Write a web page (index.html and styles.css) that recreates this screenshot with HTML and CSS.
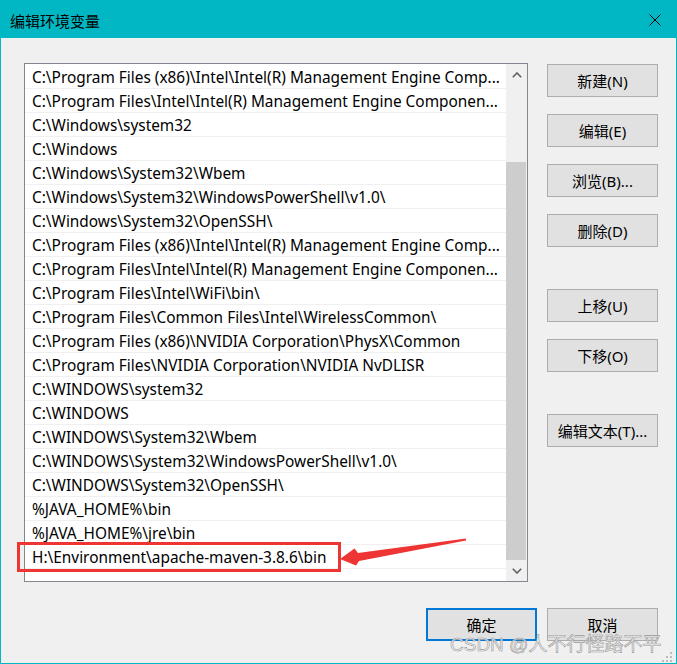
FILE: index.html
```html
<!DOCTYPE html>
<html lang="zh-CN">
<head>
  <meta charset="UTF-8" />
  <title>编辑环境变量</title>
  <link rel="stylesheet" href="styles.css">
</head>
<body>

  <div class="window">
    <div class="titlebar">
      <span class="title">编辑环境变量</span>
      <svg class="close" width="12" height="12" viewBox="0 0 12 12">
        <path d="M0.5 0.5 L11.5 11.5 M11.5 0.5 L0.5 11.5" stroke="#000" stroke-width="1" fill="none"/>
      </svg>
    </div>

    <div class="dialog">
      <div class="main">
        <!-- path list -->
        <div class="listbox">
          <div class="rows">
            <div class="row">C:\Program Files (x86)\Intel\Intel(R) Management Engine Comp...</div>
            <div class="row">C:\Program Files\Intel\Intel(R) Management Engine Componen...</div>
            <div class="row">C:\Windows\system32</div>
            <div class="row">C:\Windows</div>
            <div class="row">C:\Windows\System32\Wbem</div>
            <div class="row">C:\Windows\System32\WindowsPowerShell\v1.0\</div>
            <div class="row">C:\Windows\System32\OpenSSH\</div>
            <div class="row">C:\Program Files (x86)\Intel\Intel(R) Management Engine Comp...</div>
            <div class="row">C:\Program Files\Intel\Intel(R) Management Engine Componen...</div>
            <div class="row">C:\Program Files\Intel\WiFi\bin\</div>
            <div class="row">C:\Program Files\Common Files\Intel\WirelessCommon\</div>
            <div class="row">C:\Program Files (x86)\NVIDIA Corporation\PhysX\Common</div>
            <div class="row">C:\Program Files\NVIDIA Corporation\NVIDIA NvDLISR</div>
            <div class="row">C:\WINDOWS\system32</div>
            <div class="row">C:\WINDOWS</div>
            <div class="row">C:\WINDOWS\System32\Wbem</div>
            <div class="row">C:\WINDOWS\System32\WindowsPowerShell\v1.0\</div>
            <div class="row">C:\WINDOWS\System32\OpenSSH\</div>
            <div class="row">%JAVA_HOME%\bin</div>
            <div class="row">%JAVA_HOME%\jre\bin</div>
            <div class="row">H:\Environment\apache-maven-3.8.6\bin</div>
          </div>
          <div class="scrollbar">
            <div class="scroll-btn">
              <svg width="10" height="6" viewBox="0 0 10 6"><path d="M0.8 5.2 L5 1 L9.2 5.2" stroke="#606060" stroke-width="1.6" fill="none"/></svg>
            </div>
            <div class="track"><div class="thumb"></div></div>
            <div class="scroll-btn">
              <svg width="10" height="6" viewBox="0 0 10 6"><path d="M0.8 0.8 L5 5 L9.2 0.8" stroke="#606060" stroke-width="1.6" fill="none"/></svg>
            </div>
          </div>
        </div>

        <!-- action buttons -->
        <div class="side">
          <button class="btn">新建(N)</button>
          <button class="btn">编辑(E)</button>
          <button class="btn">浏览(B)...</button>
          <button class="btn">删除(D)</button>
          <button class="btn group">上移(U)</button>
          <button class="btn">下移(O)</button>
          <button class="btn group">编辑文本(T)...</button>
        </div>
      </div>

      <div class="footer">
        <button class="btn default">确定</button>
        <button class="btn">取消</button>
      </div>
    </div>

    <!-- annotation drawn over the screenshot -->
    <svg class="markup" width="677" height="664" viewBox="0 0 677 664">
      <rect x="18.5" y="543.5" width="321" height="27" fill="none" stroke="#ef3434" stroke-width="3"/>
      <polygon points="466,538.5 358,553 354.5,548.5 340,559 356,565.5 359,561 466,540.5" fill="#ef3434"/>
    </svg>

    <div class="watermark">CSDN @人不行怪路不平</div>
    <svg class="grip" width="11" height="10" viewBox="0 0 11 10">
      <rect x="8" y="0" width="2" height="2" fill="#bcbcbc"/>
      <rect x="4" y="4" width="2" height="2" fill="#bcbcbc"/>
      <rect x="8" y="4" width="2" height="2" fill="#bcbcbc"/>
      <rect x="0" y="8" width="2" height="2" fill="#bcbcbc"/>
      <rect x="4" y="8" width="2" height="2" fill="#bcbcbc"/>
      <rect x="8" y="8" width="2" height="2" fill="#bcbcbc"/>
    </svg>
  </div>

</body>
</html>
```

FILE: styles.css
```css
body {
  margin: 0;
  font-family: "Noto Sans", "Noto Sans CJK SC", sans-serif;
  font-size: 15px;
  color: #000;
  background: #f0f0f0;
}
.window {
  position: relative;
  width: 677px;
  height: 664px;
  box-sizing: border-box;
  background: #f0f0f0;
  overflow: hidden;
}
.titlebar {
  height: 38px;
  background: #00b7c3;
  display: flex;
  align-items: center;
  justify-content: space-between;
  padding: 0 16px 0 10px;
}
.title {
  font-family: "Noto Sans CJK SC", sans-serif;
  font-size: 15px;
  line-height: 1;
  margin-top: 2px;
}
.close {
  margin-top: 2px;
}
.dialog {
  height: 626px;
  box-sizing: border-box;
  border: 1px solid #00b7c3;
  border-top: none;
  padding: 25px 18px 0 23px;
}
.main {
  display: flex;
  gap: 19px;
}
.listbox {
  width: 504px;
  height: 519px;
  box-sizing: border-box;
  border: 1px solid #828790;
  background: #fff;
  display: flex;
}
.rows {
  flex: 1;
  padding-top: 1px;
  overflow: hidden;
}
.row {
  height: 23px;
  line-height: 25px;
  font-size: 15.4px;
  border-bottom: 1px solid #f0f0f0;
  padding-left: 7px;
  white-space: nowrap;
  overflow: hidden;
}
.scrollbar {
  width: 21px;
  background: #f0f0f0;
  display: flex;
  flex-direction: column;
}
.scroll-btn {
  height: 21px;
  display: flex;
  align-items: center;
  justify-content: center;
}
.track {
  flex: 1;
  padding: 77px 1px 0 0;
}
.thumb {
  height: 100%;
  background: #cdcdcd;
}
.side {
  display: flex;
  flex-direction: column;
  gap: 17px;
  padding-top: 1px;
}
.btn {
  width: 111px;
  height: 33px;
  box-sizing: border-box;
  border: 1px solid #adadad;
  background: #e1e1e1;
  font-family: "Noto Sans", "Noto Sans CJK SC", sans-serif;
  font-size: 15px;
  color: #000;
  padding: 0;
  margin: 0;
}
.side .group {
  margin-top: 25px;
}
.footer {
  display: flex;
  justify-content: flex-end;
  gap: 10px;
  padding-top: 26px;
}
.btn.default {
  border: 2px solid #0078d7;
}
.markup {
  position: absolute;
  left: 0;
  top: 0;
  pointer-events: none;
}
.watermark {
  position: absolute;
  left: 450px;
  top: 633px;
  font-family: "Liberation Sans", "Noto Sans CJK SC", sans-serif;
  font-size: 19px;
  line-height: 24px;
  color: rgba(245, 245, 245, 0.85);
  -webkit-text-stroke: 0.6px #999;
  white-space: nowrap;
}
.grip {
  position: absolute;
  right: 4px;
  bottom: 2px;
}
```
